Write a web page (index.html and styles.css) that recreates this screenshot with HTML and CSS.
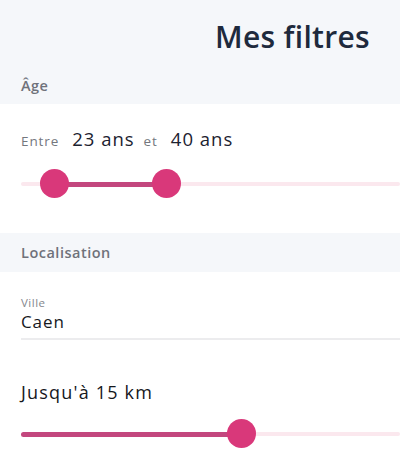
FILE: index.html
```html
<!DOCTYPE html>
<html lang="fr">
<head>
    <meta charset="UTF-8">
    <meta name="viewport" content="width=device-width, initial-scale=1.0">
    <title>Mes filtres</title>
    <link rel="stylesheet" href="styles.css">
</head>
<body>
    <header class="page-header">
        <h1>Mes filtres</h1>
    </header>

    <!-- Age -->
    <div class="section-label">Âge</div>
    <div class="section-body age-body">
        <div class="range-text">
            <span class="muted">Entre</span>
            <span class="value">23 ans</span>
            <span class="muted">et</span>
            <span class="value">40 ans</span>
        </div>
        <div class="slider">
            <div class="track"></div>
            <div class="track-active" style="left: 33px; width: 112px;"></div>
            <div class="thumb" style="left: 33px;"></div>
            <div class="thumb" style="left: 145px;"></div>
        </div>
    </div>

    <!-- Localisation -->
    <div class="section-label">Localisation</div>
    <div class="section-body loc-body">
        <div class="field">
            <label>Ville</label>
            <div class="field-value">Caen</div>
        </div>
        <div class="distance">Jusqu'à 15 km</div>
        <div class="slider">
            <div class="track"></div>
            <div class="track-active" style="left: 0; width: 220px;"></div>
            <div class="thumb" style="left: 220px;"></div>
        </div>
    </div>
</body>
</html>
```

FILE: styles.css
```css
/* General */
body {
    margin: 0;
    padding: 0;
    font-family: "Open Sans", "Liberation Sans", sans-serif;
    background-color: #f5f7fa;
    color: #1c1f2a;
    overflow: hidden;
}

/* Header */
.page-header {
    height: 62px;
    display: flex;
    justify-content: flex-end;
    align-items: flex-end;
    padding-right: 30px;
}

.page-header h1 {
    margin: 0;
    font-size: 30px;
    font-weight: 600;
    color: #1e2a3d;
    line-height: 40px;
    padding-bottom: 5px;
    letter-spacing: 0.3px;
}

/* Section labels (grey bands) */
.section-label {
    padding: 0 21px;
    font-size: 14.5px;
    font-weight: 600;
    color: #6f727a;
    height: 39px;
    line-height: 39px;
    letter-spacing: 0.5px;
}

.page-header + .section-label {
    height: 42px;
    line-height: 47px;
}

.section-body {
    background-color: #fff;
    padding: 0 0 0 21px;
}

.age-body {
    height: 129px;
}

.range-text {
    padding-top: 22px;
    display: flex;
    align-items: baseline;
}

.range-text .muted {
    font-size: 13.5px;
    color: #74777e;
    letter-spacing: 0.9px;
    margin-right: 13px;
}

.range-text .value {
    font-size: 18.5px;
    color: #1c2230;
    letter-spacing: 1px;
    margin-right: 9px;
}

/* Slider */
.slider {
    position: relative;
    height: 30px;
    margin-top: 18px;
}

.track {
    position: absolute;
    left: 0;
    right: 0;
    top: 13px;
    height: 4px;
    background-color: #fbe8ee;
    border-radius: 2px;
}

.track-active {
    position: absolute;
    top: 12.5px;
    height: 5px;
    background-color: #c3477e;
    border-radius: 3px;
}

.thumb {
    position: absolute;
    top: 0;
    width: 29px;
    height: 29px;
    margin-left: -14.5px;
    border-radius: 50%;
    background-color: #d9387a;
}

/* Localisation */
.loc-body {
    height: 185px;
    padding-top: 20px;
}

.field {
    padding-top: 4px;
    border-bottom: 2px solid #ececee;
    padding-bottom: 4px;
}

.field label {
    display: block;
    font-size: 11.5px;
    color: #85878d;
    line-height: 14px;
    letter-spacing: 0.5px;
}

.field-value {
    font-size: 17px;
    color: #16181d;
    line-height: 24px;
    letter-spacing: 0.9px;
}

.distance {
    margin-top: 40px;
    font-size: 18px;
    color: #15171c;
    letter-spacing: 1.2px;
}

.loc-body .slider {
    margin-top: 15px;
}
```
